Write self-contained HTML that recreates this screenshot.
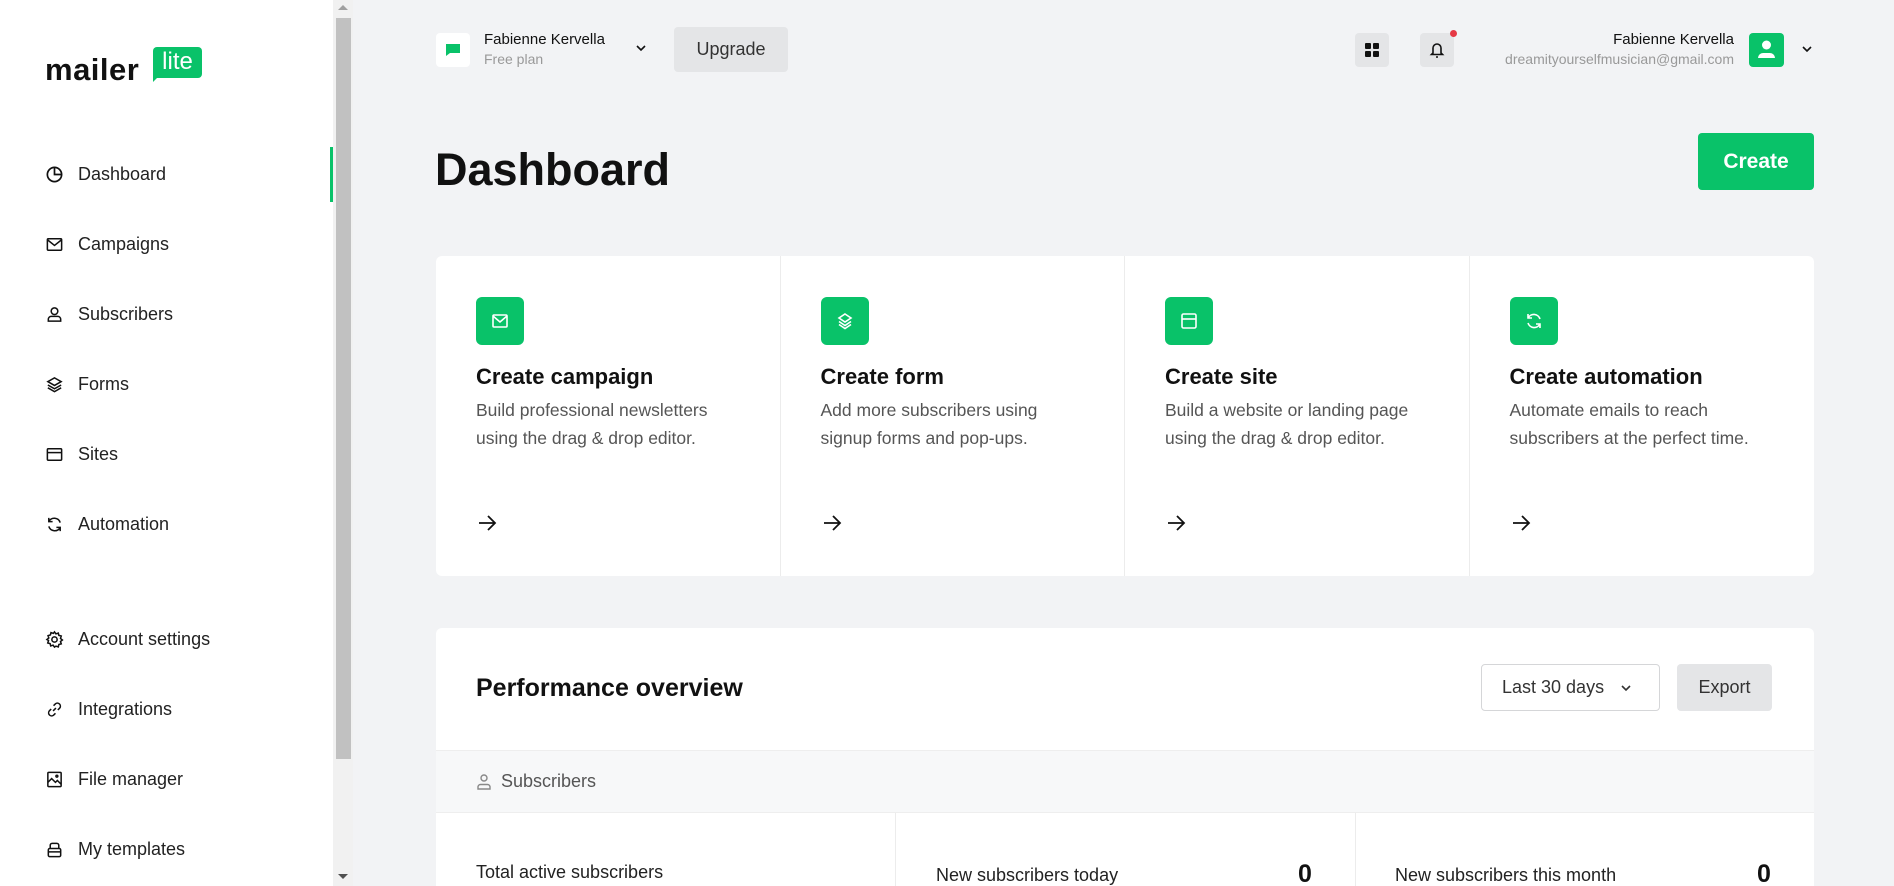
<!DOCTYPE html>
<html style="width:1894px;height:886px;overflow:hidden"><head><meta charset="utf-8"><style>
*{box-sizing:border-box;margin:0;padding:0}
body{width:1894px;height:886px;overflow:hidden;background:#f2f3f5;font-family:"Liberation Sans",sans-serif;color:#111;position:relative}
.side{position:absolute;left:0;top:0;width:333px;height:886px;background:#fff}
.sb{position:absolute;left:333px;top:0;width:20px;height:886px;background:#f1f1f1}
.thumb{position:absolute;left:336px;top:18px;width:15px;height:741px;background:#c1c1c1}
.nav{position:absolute;left:45px;font-size:18px;color:#222;display:flex;align-items:center;gap:14px}
.nav svg{width:19px;height:19px}
.abs{position:absolute}
.card{position:absolute;top:256px;height:320px;width:344.5px;border-right:1px solid #ececec}
.card .ic{position:absolute;left:40px;top:41px;width:48px;height:48px;background:#09c269;border-radius:6px;display:flex;align-items:center;justify-content:center}
.card h3{position:absolute;left:40px;top:108px;font-size:22px;font-weight:bold;color:#111}
.card p{position:absolute;left:40px;top:140px;width:264px;font-size:17.5px;line-height:28px;color:#555}
.card .ar{position:absolute;left:40px;top:256px}
</style></head><body>
<div class="side">
 <div class="abs" style="left:45px;top:52px;font-size:31px;font-weight:bold;letter-spacing:0.5px;color:#111">mailer</div>
 <div class="abs" style="left:153px;top:47px;width:49px;height:31px;background:#09c269;border-radius:4px;color:#fff;font-size:24px;text-align:center;line-height:29px">lite</div>
 <div class="abs" style="left:153px;top:74px;width:0;height:0;border-left:8px solid #09c269;border-bottom:8px solid transparent"></div>
 <div class="abs" style="left:330px;top:147px;width:3px;height:55px;background:#09c269"></div>
 <div class="nav" style="top:164px"><svg viewBox="0 0 20 20" fill="none" stroke="#111" stroke-width="1.8"><circle cx="10" cy="10" r="7.5"/><path d="M10 2.5V10H17.5"/></svg>Dashboard</div>
 <div class="nav" style="top:234px"><svg viewBox="0 0 20 20" fill="none" stroke="#111" stroke-width="1.6"><rect x="2.5" y="4" width="15" height="12" rx="1"/><path d="M2.5 5l7.5 6 7.5-6"/></svg>Campaigns</div>
 <div class="nav" style="top:304px"><svg viewBox="0 0 20 20" fill="none" stroke="#111" stroke-width="1.6"><circle cx="10" cy="6.5" r="3.5"/><path d="M3.5 17v-2a3 3 0 013-3h7a3 3 0 013 3v2z"/></svg>Subscribers</div>
 <div class="nav" style="top:374px"><svg viewBox="0 0 20 20" fill="none" stroke="#111" stroke-width="1.6"><path d="M10 3l7 4-7 4-7-4z M3 10.5l7 4 7-4 M3 13.5l7 4 7-4"/></svg>Forms</div>
 <div class="nav" style="top:444px"><svg viewBox="0 0 20 20" fill="none" stroke="#111" stroke-width="1.6"><rect x="2.5" y="4" width="15" height="12" rx="1"/><path d="M2.5 8h15"/></svg>Sites</div>
 <div class="nav" style="top:514px"><svg viewBox="0 0 20 20" fill="none" stroke="#111" stroke-width="1.6"><path d="M16 8a6.5 6.5 0 00-12-1M4 12a6.5 6.5 0 0012 1M4 3v4h4M16 17v-4h-4"/></svg>Automation</div>
 <div class="nav" style="top:629px"><svg viewBox="0 0 20 20" fill="none" stroke="#111" stroke-width="1.6"><circle cx="10" cy="10" r="2.8"/><path d="M10 2l1.5 2 2.5-.8.6 2.5 2.5.7-.8 2.5 2 1.6-2 1.6.8 2.5-2.5.7-.6 2.5-2.5-.8L10 18l-1.5-2-2.5.8-.6-2.5-2.5-.7.8-2.5L2 10l2-1.6-.8-2.5 2.5-.7.6-2.5 2.5.8z"/></svg>Account settings</div>
 <div class="nav" style="top:699px"><svg viewBox="0 0 20 20" fill="none" stroke="#111" stroke-width="1.6"><path d="M8.5 11.5l3-3M9 6l2-2a3.2 3.2 0 014.5 4.5l-2 2M11 14l-2 2a3.2 3.2 0 01-4.5-4.5l2-2"/></svg>Integrations</div>
 <div class="nav" style="top:769px"><svg viewBox="0 0 20 20" fill="none" stroke="#111" stroke-width="1.6"><rect x="3" y="2.5" width="14" height="15" rx="1"/><path d="M3 13l4-4 4 4 2-2 4 4"/><circle cx="12.5" cy="6.5" r="1"/></svg>File manager</div>
 <div class="nav" style="top:839px"><svg viewBox="0 0 20 20" fill="none" stroke="#111" stroke-width="1.6"><rect x="3.5" y="9" width="13" height="8.5" rx="1.5"/><path d="M5.5 9V5.5a2 2 0 012-2h5a2 2 0 012 2V9M3.5 12.5h13"/></svg>My templates</div>
</div>
<div class="sb"></div><div class="thumb"></div>
<div class="abs" style="left:338px;top:5px;border-left:5px solid transparent;border-right:5px solid transparent;border-bottom:5px solid #a0a0a0"></div>
<div class="abs" style="left:338px;top:874px;border-left:5px solid transparent;border-right:5px solid transparent;border-top:5px solid #505050"></div>

<div class="abs" style="left:436px;top:33px;width:34px;height:34px;background:#fff;border-radius:4px;display:flex;align-items:center;justify-content:center"><svg width="16" height="16" viewBox="0 0 16 16"><path d="M1 2h14v9H5l-4 3z" fill="#09c269"/></svg></div>
<div class="abs" style="left:484px;top:31px;font-size:15px;color:#111">Fabienne Kervella</div>
<div class="abs" style="left:484px;top:51px;font-size:14px;color:#999">Free plan</div>
<svg class="abs" style="left:635px;top:44px" width="12" height="8" viewBox="0 0 12 8" fill="none" stroke="#111" stroke-width="1.6"><path d="M2 2l4 4 4-4"/></svg>
<div class="abs" style="left:674px;top:27px;width:114px;height:45px;background:#e4e5e7;border-radius:4px;text-align:center;line-height:45px;font-size:18px;color:#333">Upgrade</div>

<div class="abs" style="left:1355px;top:33px;width:34px;height:34px;background:#e4e5e7;border-radius:4px"><div class="abs" style="left:10px;top:10px;width:6px;height:6px;background:#111;box-shadow:8px 0 #111,0 8px #111,8px 8px #111;border-radius:1px"></div></div>
<div class="abs" style="left:1420px;top:33px;width:34px;height:34px;background:#e4e5e7;border-radius:4px;display:flex;align-items:center;justify-content:center"><svg width="16" height="18" viewBox="0 0 16 18" fill="none" stroke="#111" stroke-width="1.6"><path d="M4 12V7a4 4 0 018 0v5l1.5 1.5h-11z M7 16h2"/></svg></div>
<div class="abs" style="left:1450px;top:30px;width:7px;height:7px;border-radius:50%;background:#e53945"></div>
<div class="abs" style="right:160px;top:31px;font-size:15px;color:#111;text-align:right">Fabienne Kervella</div>
<div class="abs" style="right:160px;top:51px;font-size:14px;color:#999;text-align:right">dreamityourselfmusician@gmail.com</div>
<div class="abs" style="left:1749px;top:33px;width:35px;height:34px;background:#09c269;border-radius:4px"><svg width="35" height="34" viewBox="0 0 35 34" fill="#fff"><circle cx="17.5" cy="12" r="4.5"/><path d="M9 25a5 5 0 015-5h7a5 5 0 015 5z"/></svg></div>
<svg class="abs" style="left:1801px;top:45px" width="12" height="8" viewBox="0 0 12 8" fill="none" stroke="#111" stroke-width="1.6"><path d="M2 2l4 4 4-4"/></svg>

<div class="abs" style="left:435px;top:144px;font-size:45px;font-weight:bold;color:#111">Dashboard</div>
<div class="abs" style="left:1698px;top:133px;width:116px;height:57px;background:#09c269;border-radius:4px;color:#fff;font-size:21px;font-weight:bold;text-align:center;line-height:57px">Create</div>

<div class="abs" style="left:436px;top:256px;width:1378px;height:320px;background:#fff;border-radius:6px"></div>
<div class="card" style="left:436px"><div class="ic"><svg width="20" height="20" viewBox="0 0 20 20" fill="none" stroke="#fff" stroke-width="1.6"><rect x="3" y="4" width="14" height="12" rx="1"/><path d="M3 5l7 6 7-6"/></svg></div><h3>Create campaign</h3><p>Build professional newsletters using the drag &amp; drop editor.</p><svg class="ar" width="22" height="22" viewBox="0 0 22 22" fill="none" stroke="#111" stroke-width="1.8"><path d="M3 11h16M12 4l7 7-7 7"/></svg></div>
<div class="card" style="left:780.5px"><div class="ic"><svg width="20" height="20" viewBox="0 0 20 20" fill="none" stroke="#fff" stroke-width="1.6"><path d="M10 3l6 4-6 4-6-4z M4 10.5l6 4 6-4 M4 13.5l6 4 6-4"/></svg></div><h3>Create form</h3><p>Add more subscribers using signup forms and pop-ups.</p><svg class="ar" width="22" height="22" viewBox="0 0 22 22" fill="none" stroke="#111" stroke-width="1.8"><path d="M3 11h16M12 4l7 7-7 7"/></svg></div>
<div class="card" style="left:1125px"><div class="ic"><svg width="20" height="20" viewBox="0 0 20 20" fill="none" stroke="#fff" stroke-width="1.6"><rect x="3" y="3" width="14" height="14" rx="1.5"/><path d="M3 8h14"/></svg></div><h3>Create site</h3><p>Build a website or landing page using the drag &amp; drop editor.</p><svg class="ar" width="22" height="22" viewBox="0 0 22 22" fill="none" stroke="#111" stroke-width="1.8"><path d="M3 11h16M12 4l7 7-7 7"/></svg></div>
<div class="card" style="left:1469.5px;border-right:none"><div class="ic"><svg width="20" height="20" viewBox="0 0 20 20" fill="none" stroke="#fff" stroke-width="1.6"><path d="M16 8a6.5 6.5 0 00-12-1M4 12a6.5 6.5 0 0012 1M4 3v4h4M16 17v-4h-4"/></svg></div><h3>Create automation</h3><p>Automate emails to reach subscribers at the perfect time.</p><svg class="ar" width="22" height="22" viewBox="0 0 22 22" fill="none" stroke="#111" stroke-width="1.8"><path d="M3 11h16M12 4l7 7-7 7"/></svg></div>

<div class="abs" style="left:436px;top:628px;width:1378px;height:258px;background:#fff;border-radius:6px 6px 0 0"></div>
<div class="abs" style="left:476px;top:674px;font-size:25px;font-weight:bold;color:#111">Performance overview</div>
<div class="abs" style="left:1481px;top:664px;width:179px;height:47px;border:1px solid #d5d6d8;border-radius:4px;background:#fff;font-size:18px;color:#333;line-height:45px;padding-left:20px">Last 30 days<svg style="position:absolute;left:138px;top:19px" width="12" height="8" viewBox="0 0 12 8" fill="none" stroke="#333" stroke-width="1.6"><path d="M2 2l4 4 4-4"/></svg></div>
<div class="abs" style="left:1677px;top:664px;width:95px;height:47px;background:#e4e5e7;border-radius:4px;font-size:18px;color:#333;text-align:center;line-height:47px">Export</div>
<div class="abs" style="left:436px;top:750px;width:1378px;height:63px;background:#f7f8f9;border-top:1px solid #eee;border-bottom:1px solid #eee"></div>
<svg class="abs" style="left:476px;top:773px" width="16" height="18" viewBox="0 0 16 18" fill="none" stroke="#888" stroke-width="1.4"><circle cx="8" cy="5" r="3"/><path d="M2 16v-2a2.5 2.5 0 012.5-2.5h7A2.5 2.5 0 0114 14v2z"/></svg>
<div class="abs" style="left:501px;top:771px;font-size:18px;color:#555">Subscribers</div>
<div class="abs" style="left:895px;top:813px;width:1px;height:73px;background:#ececec"></div>
<div class="abs" style="left:1355px;top:813px;width:1px;height:73px;background:#ececec"></div>
<div class="abs" style="left:476px;top:862px;font-size:18px;color:#222">Total active subscribers</div>
<div class="abs" style="left:936px;top:865px;font-size:18px;color:#222">New subscribers today</div>
<div class="abs" style="left:1298px;top:860px;font-size:25px;font-weight:bold;color:#111">0</div>
<div class="abs" style="left:1395px;top:865px;font-size:18px;color:#222">New subscribers this month</div>
<div class="abs" style="left:1757px;top:860px;font-size:25px;font-weight:bold;color:#111">0</div>
</body></html>
